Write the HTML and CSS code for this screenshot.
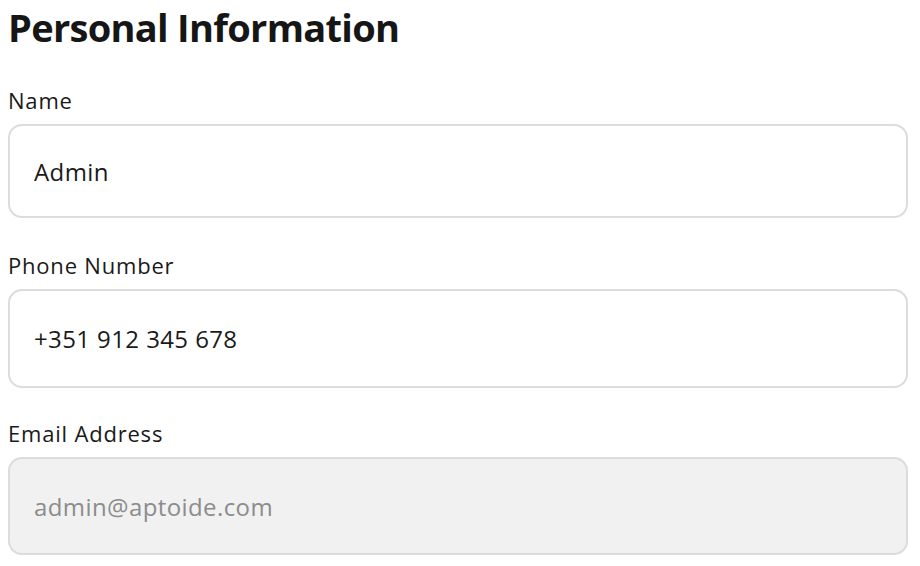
FILE: index.html
```html
<!DOCTYPE html>
<html lang="en">
<head>
    <meta charset="UTF-8">
    <meta name="viewport" content="width=device-width, initial-scale=1.0">
    <title>Personal Information</title>
    <link rel="stylesheet" href="styles.css">
</head>
<body>
    <div class="container">
        <h2>Personal Information</h2>
        <div class="input-group">
            <label for="name">Name</label>
            <input type="text" id="name" class="first" value="Admin">
        </div>
        <div class="input-group">
            <label for="phone">Phone Number</label>
            <input type="tel" id="phone" value="+351 912 345 678">
        </div>
        <div class="input-group">
            <label for="email">Email Address</label>
            <input type="email" id="email" value="admin@aptoide.com" disabled>
        </div>
    </div>
</body>
</html>
```

FILE: styles.css
```css
body {
    font-family: 'Open Sans', sans-serif;
    background-color: #fff;
    margin: 0;
    padding: 0 8px;
    color: #1a1a1a;
}
.container {
    width: 900px;
}
h2 {
    margin: 0;
    padding-top: 3px;
    font-size: 38px;
    line-height: 48px;
    font-weight: 700;
    letter-spacing: -0.7px;
    color: #161616;
}
.input-group {
    display: flex;
    flex-direction: column;
}
.input-group label {
    font-size: 22px;
    line-height: 28px;
    letter-spacing: 0.8px;
    margin-bottom: 10px;
    color: #1a1a1a;
}
.input-group:first-of-type label {
    margin-top: 35px;
}
.input-group input {
    height: 99px;
    padding: 0 24px;
    box-sizing: border-box;
    border: 2px solid #dcdcdc;
    border-radius: 14px;
    font-family: inherit;
    font-size: 24px;
    letter-spacing: 0.4px;
    color: #1a1a1a;
    background-color: #fff;
    margin-bottom: 31px;
    outline: none;
}
.input-group input.first {
    height: 94px;
    margin-bottom: 33px;
}
.input-group input:disabled {
    height: 98px;
    background-color: #f1f1f1;
    color: #8c8c8c;
}
```
